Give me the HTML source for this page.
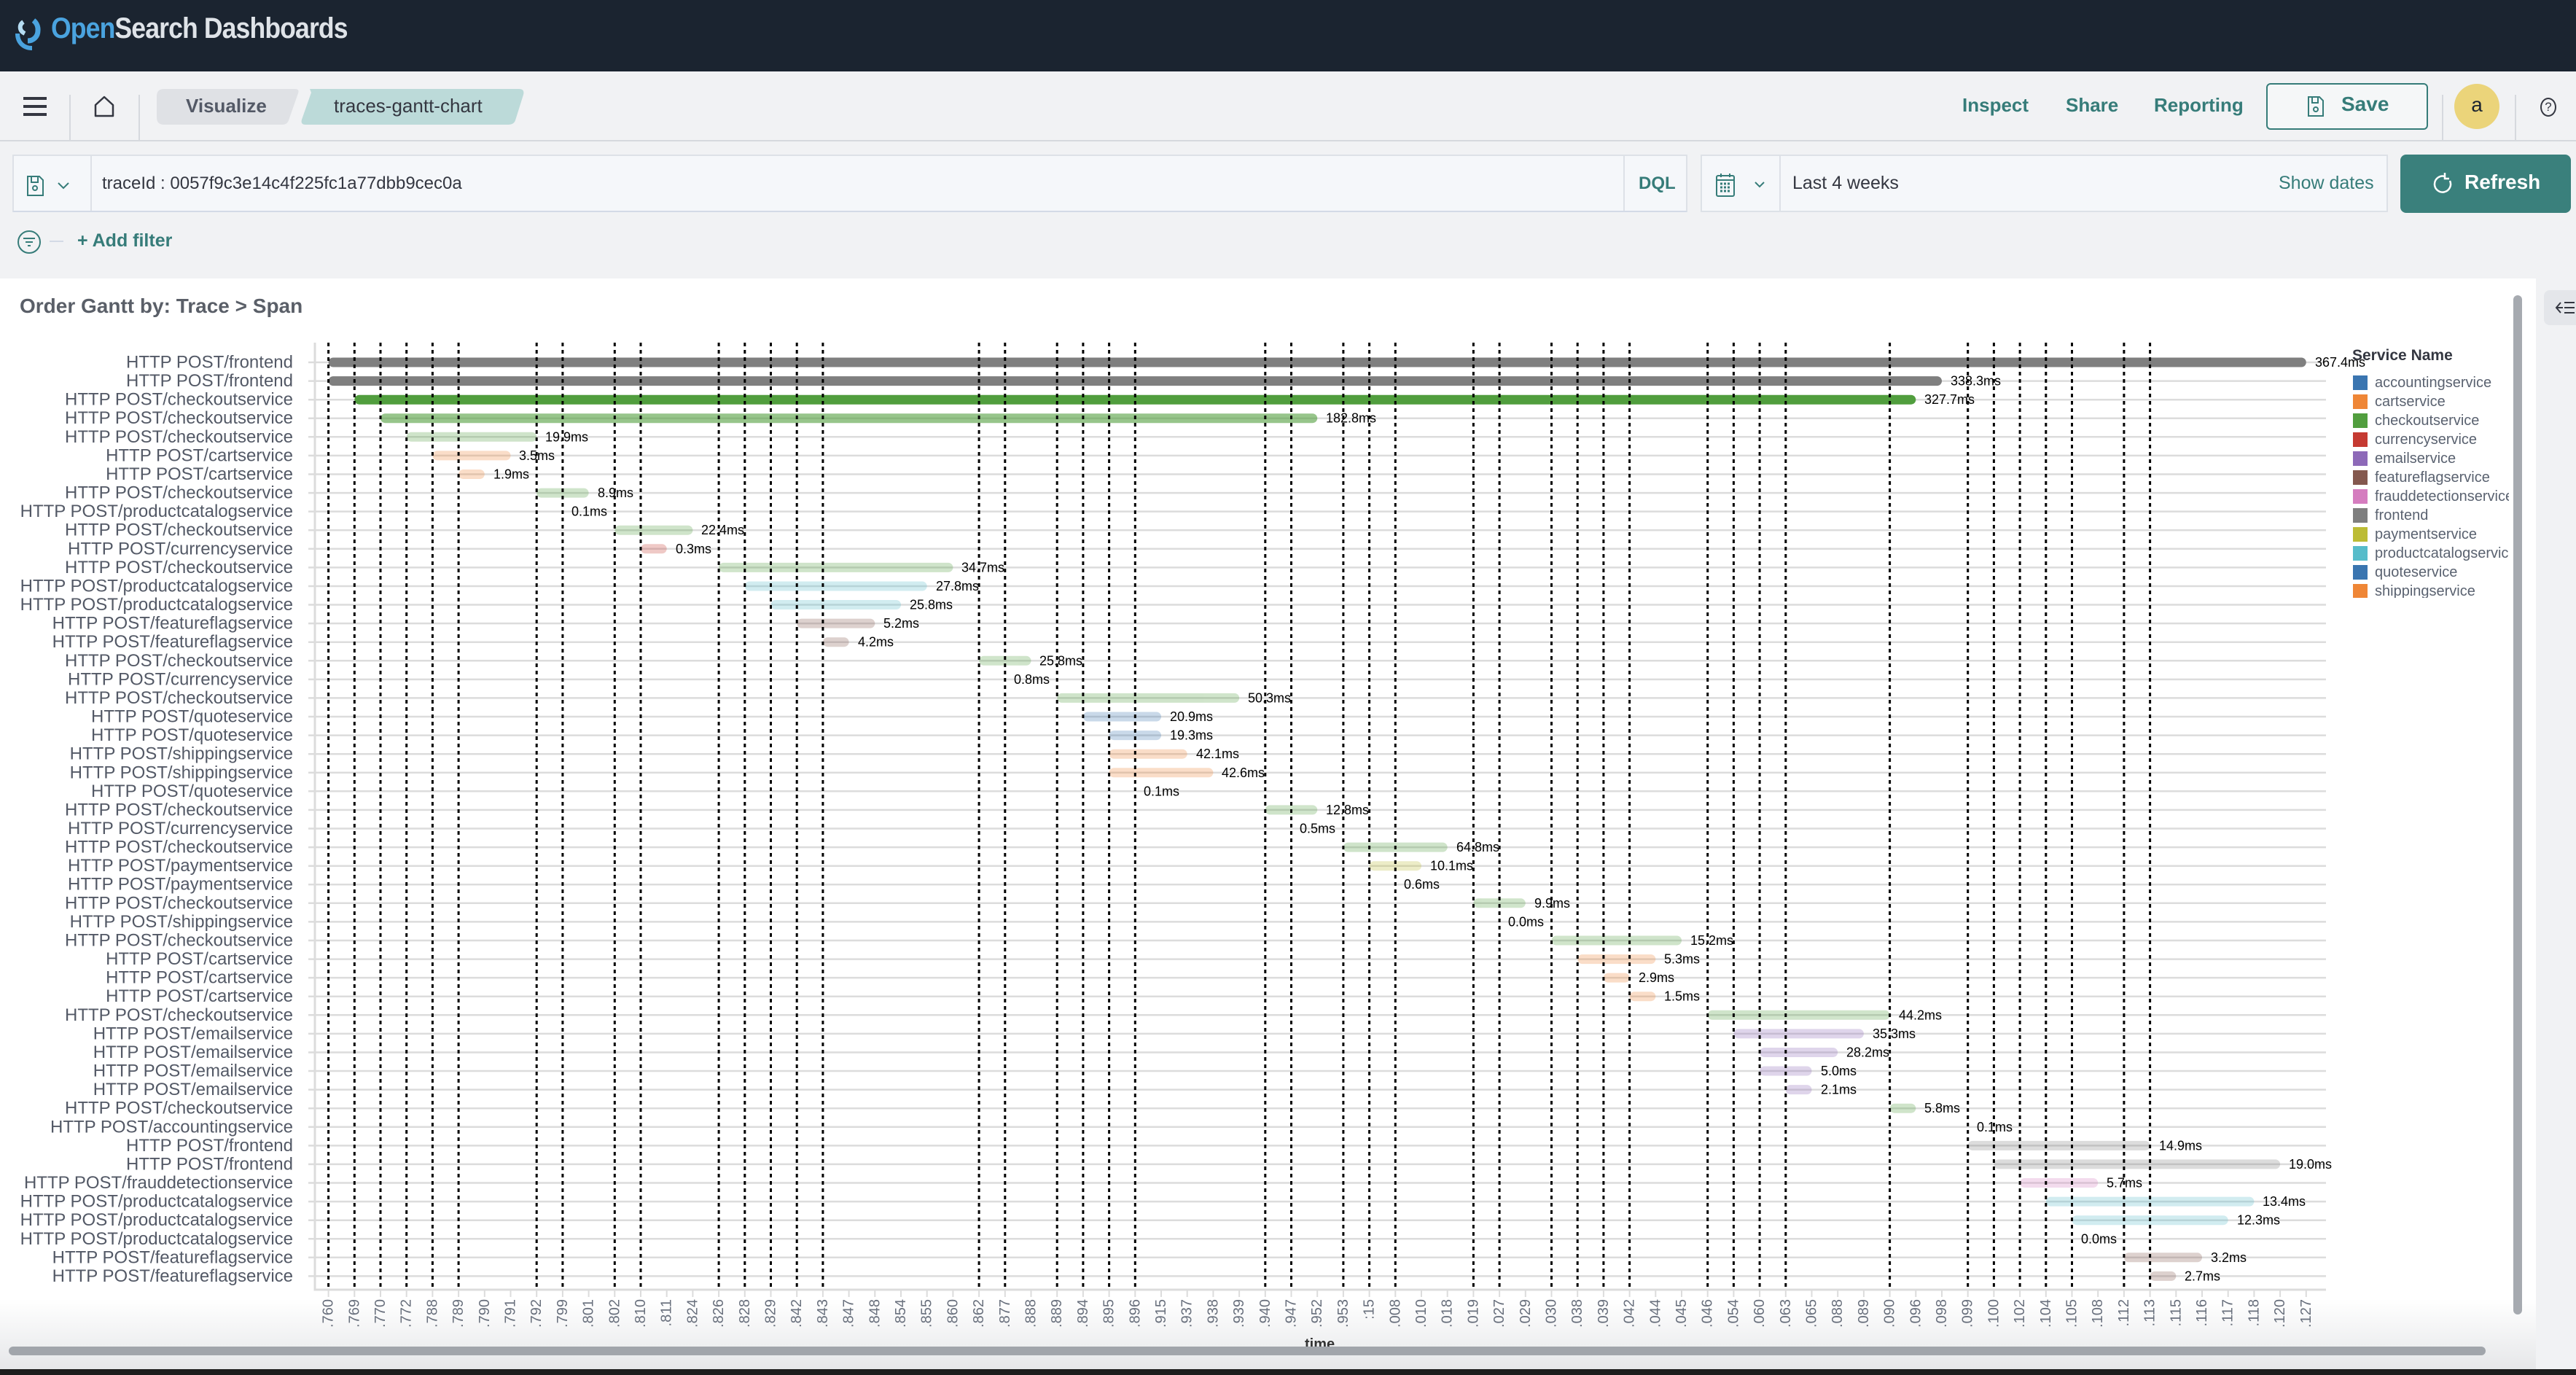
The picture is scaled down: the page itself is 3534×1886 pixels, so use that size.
<!DOCTYPE html>
<html><head><meta charset="utf-8"><style>
*{margin:0;padding:0;box-sizing:border-box}
body{width:3534px;height:1886px;overflow:hidden;background:#f1f2f4;font-family:"Liberation Sans",sans-serif;position:relative}
.a{position:absolute}
.t{color:#367c79;font-weight:bold;font-size:25px}
</style></head><body>
<div class="a" style="left:0;top:0;width:3534px;height:98px;background:#1b2430"></div>
<svg class="a" style="left:18px;top:24px" width="46" height="46" viewBox="0 0 46 46"><path d="M28 4a16 16 0 0 1 6 14c0 8-6 14-14 14" fill="none" stroke="#4aa3df" stroke-width="7"/><path d="M6 22c0 12 8 20 20 20" fill="none" stroke="#4aa3df" stroke-width="6"/><path d="M14 6c-6 4-6 12 2 16" fill="none" stroke="#b5dcf2" stroke-width="6"/></svg>
<div class="a" style="left:70px;top:17px;font-size:40px;font-weight:bold;transform:scaleX(.89);transform-origin:left;color:#dfe3e8;white-space:nowrap;letter-spacing:-1px"><span style="color:#4aa3df">Open</span>Search Dashboards</div>

<div class="a" style="left:0;top:98px;width:3534px;height:96px;background:#f1f2f4;border-bottom:2px solid #d6d9de"></div>
<div class="a" style="left:32px;top:133px;width:32px;height:4px;background:#343741"></div>
<div class="a" style="left:32px;top:144px;width:32px;height:4px;background:#343741"></div>
<div class="a" style="left:32px;top:155px;width:32px;height:4px;background:#343741"></div>
<div class="a" style="left:95px;top:130px;width:2px;height:64px;background:#d6d9de"></div>
<div class="a" style="left:190px;top:130px;width:2px;height:64px;background:#d6d9de"></div>
<svg class="a" style="left:128px;top:130px" width="30" height="32"><path d="M3 14L15 3L27 14V29H3Z" fill="none" stroke="#343741" stroke-width="2.5" stroke-linejoin="round"/></svg>
<svg class="a" style="left:215px;top:122px" width="510" height="49"><path d="M10 0H190Q196 0 194 6L181 43Q179 49 172 49H10Q0 49 0 39V10Q0 0 10 0Z" fill="#dfe1e5"/><path d="M210 0H497Q505 0 503 8L492 43Q490 49 482 49H204Q197 49 199 42L212 5Z" fill="#bcdad9"/></svg>
<div class="a" style="left:255px;top:130px;font-size:26px;font-weight:bold;color:#535966">Visualize</div>
<div class="a" style="left:458px;top:130px;font-size:26px;color:#343741">traces-gantt-chart</div>
<div class="a t" style="left:2692px;top:129px;font-size:26px">Inspect</div>
<div class="a t" style="left:2834px;top:129px;font-size:26px">Share</div>
<div class="a t" style="left:2955px;top:129px;font-size:26px">Reporting</div>
<div class="a" style="left:3109px;top:114px;width:222px;height:64px;border:2px solid #367c79;border-radius:6px;background:#f5f7f8"></div>
<svg class="a" style="left:3165px;top:131px" width="24" height="30"><path d="M2 2H17L22 7V28H2Z M7 2V10H15V2" fill="none" stroke="#367c79" stroke-width="2"/><circle cx="12" cy="19" r="3" fill="none" stroke="#367c79" stroke-width="2"/></svg>
<div class="a t" style="left:3212px;top:127px;font-size:28px">Save</div>
<div class="a" style="left:3350px;top:130px;width:2px;height:64px;background:#d6d9de"></div>
<div class="a" style="left:3367px;top:115px;width:62px;height:62px;border-radius:50%;background:#ebd47a;text-align:center;font-size:28px;line-height:58px;color:#1b2430">a</div>
<div class="a" style="left:3450px;top:130px;width:2px;height:64px;background:#d6d9de"></div>
<div class="a" style="left:3485px;top:134px;width:22px;height:26px;border:2px solid #343741;border-radius:50%;font-size:17px;text-align:center;line-height:22px;color:#343741">?</div>

<div class="a" style="left:17px;top:212px;width:2298px;height:79px;background:#f5f7fa;border:2px solid #dde1e7;border-bottom-color:#d3dae6"></div>
<svg class="a" style="left:36px;top:240px" width="60" height="30"><path d="M2 2H18L23 7V28H2Z M7 2V10H16V2" fill="none" stroke="#367c79" stroke-width="2"/><circle cx="12" cy="18" r="3" fill="none" stroke="#367c79" stroke-width="2"/><path d="M44 11L51 18L58 11" fill="none" stroke="#367c79" stroke-width="2"/></svg>
<div class="a" style="left:124px;top:214px;width:2px;height:75px;background:#dde1e7"></div>
<div class="a" style="left:140px;top:238px;font-size:24px;color:#343741">traceId : 0057f9c3e14c4f225fc1a77dbb9cec0a</div>
<div class="a" style="left:2227px;top:214px;width:2px;height:75px;background:#dde1e7"></div>
<div class="a t" style="left:2248px;top:238px;font-size:24px">DQL</div>
<div class="a" style="left:2333px;top:212px;width:943px;height:79px;background:#f5f7fa;border:2px solid #dde1e7"></div>
<svg class="a" style="left:2354px;top:237px" width="70" height="34"><rect x="1" y="4" width="24" height="28" rx="2" fill="none" stroke="#367c79" stroke-width="2"/><path d="M1 10H25M7 1V6M19 1V6" stroke="#367c79" stroke-width="2"/><path d="M6 15h3M11 15h3M16 15h3M6 20h3M11 20h3M16 20h3M6 25h3M11 25h3M16 25h3" stroke="#367c79" stroke-width="3"/><path d="M54 13L60 19L66 13" fill="none" stroke="#367c79" stroke-width="2"/></svg>
<div class="a" style="left:2441px;top:214px;width:2px;height:75px;background:#dde1e7"></div>
<div class="a" style="left:2459px;top:237px;font-size:25px;color:#343741">Last 4 weeks</div>
<div class="a" style="left:3126px;top:237px;font-size:25px;color:#367c79">Show dates</div>
<div class="a" style="left:3293px;top:212px;width:234px;height:80px;background:#3a807c;border-radius:8px"></div>
<svg class="a" style="left:3336px;top:236px" width="30" height="32"><path d="M18 6A11 11 0 1 0 25 12" fill="none" stroke="#fff" stroke-width="2.5"/><path d="M18 1V9H24" fill="none" stroke="#fff" stroke-width="2.5"/></svg>
<div class="a" style="left:3381px;top:234px;font-size:28px;font-weight:bold;color:#fff">Refresh</div>

<svg class="a" style="left:22px;top:315px" width="70" height="36"><circle cx="18" cy="17" r="15" fill="none" stroke="#367c79" stroke-width="2"/><path d="M10 12H26M13 17H23M16 22H20" stroke="#367c79" stroke-width="2"/><path d="M46 16H65" stroke="#d3dae6" stroke-width="2"/></svg>
<div class="a t" style="left:106px;top:316px">+ Add filter</div>

<div class="a" style="left:0;top:382px;width:3479px;height:1496px;background:linear-gradient(#fff 0,#fff 1400px,#e6e7e9 1496px)"></div>
<div class="a" style="left:3490px;top:398px;width:44px;height:48px;background:#e4e6ea;border-radius:8px 0 0 8px"></div>
<svg class="a" style="left:3504px;top:410px" width="30" height="24"><path d="M9 5L3 12L9 19M3 12H12M14 5H28M14 12H28M14 19H28" fill="none" stroke="#343741" stroke-width="2"/></svg>
<div class="a" style="left:27px;top:404px;font-size:28px;font-weight:bold;color:#5a5f68">Order Gantt by: Trace &gt; Span</div>

<svg class="a" style="left:0;top:0" width="3534" height="1886" font-family="Liberation Sans, sans-serif">
<path stroke="#dcdcdc" stroke-width="2.5" d="M423 497H3191M423 522.6H3191M423 548.2H3191M423 573.7H3191M423 599.3H3191M423 624.9H3191M423 650.5H3191M423 676.1H3191M423 701.6H3191M423 727.2H3191M423 752.8H3191M423 778.4H3191M423 804H3191M423 829.5H3191M423 855.1H3191M423 880.7H3191M423 906.3H3191M423 931.9H3191M423 957.4H3191M423 983H3191M423 1008.6H3191M423 1034.2H3191M423 1059.8H3191M423 1085.3H3191M423 1110.9H3191M423 1136.5H3191M423 1162.1H3191M423 1187.7H3191M423 1213.2H3191M423 1238.8H3191M423 1264.4H3191M423 1290H3191M423 1315.6H3191M423 1341.1H3191M423 1366.7H3191M423 1392.3H3191M423 1417.9H3191M423 1443.5H3191M423 1469H3191M423 1494.6H3191M423 1520.2H3191M423 1545.8H3191M423 1571.4H3191M423 1596.9H3191M423 1622.5H3191M423 1648.1H3191M423 1673.7H3191M423 1699.3H3191M423 1724.8H3191M423 1750.4H3191"/>
<path stroke="#dcdcdc" stroke-width="3" fill="none" d="M432 470V1769H3191"/>
<g transform="translate(0,-6.5)">
<rect x="450.6" y="497" width="2713.2" height="13" rx="6.5" fill="#7f7f7f"/>
<rect x="450.6" y="522.6" width="2213.4" height="13" rx="6.5" fill="#7f7f7f"/>
<rect x="486.3" y="548.2" width="2142" height="13" rx="6.5" fill="#519e3e"/>
<rect x="522" y="573.7" width="1285.2" height="13" rx="6.5" fill="#519e3e" opacity=".6"/>
<g opacity=".27">
<rect x="557.7" y="599.3" width="178.5" height="13" rx="6.5" fill="#519e3e"/>
<rect x="593.4" y="624.9" width="107.1" height="13" rx="6.5" fill="#ef8636"/>
<rect x="629.1" y="650.5" width="35.7" height="13" rx="6.5" fill="#ef8636"/>
<rect x="736.2" y="676.1" width="71.4" height="13" rx="6.5" fill="#519e3e"/>
<rect x="843.3" y="727.2" width="107.1" height="13" rx="6.5" fill="#519e3e"/>
<rect x="879" y="752.8" width="35.7" height="13" rx="6.5" fill="#c53a32"/>
<rect x="986.1" y="778.4" width="321.3" height="13" rx="6.5" fill="#519e3e"/>
<rect x="1021.8" y="804" width="249.9" height="13" rx="6.5" fill="#57bcca"/>
<rect x="1057.5" y="829.5" width="178.5" height="13" rx="6.5" fill="#57bcca"/>
<rect x="1093.2" y="855.1" width="107.1" height="13" rx="6.5" fill="#84584e"/>
<rect x="1128.9" y="880.7" width="35.7" height="13" rx="6.5" fill="#84584e"/>
<rect x="1343.1" y="906.3" width="71.4" height="13" rx="6.5" fill="#519e3e"/>
<rect x="1450.2" y="957.4" width="249.9" height="13" rx="6.5" fill="#519e3e"/>
<rect x="1485.9" y="983" width="107.1" height="13" rx="6.5" fill="#3a75b0"/>
<rect x="1521.6" y="1008.6" width="71.4" height="13" rx="6.5" fill="#3a75b0"/>
<rect x="1521.6" y="1034.2" width="107.1" height="13" rx="6.5" fill="#ef8636"/>
<rect x="1521.6" y="1059.8" width="142.8" height="13" rx="6.5" fill="#ef8636"/>
<rect x="1735.8" y="1110.9" width="71.4" height="13" rx="6.5" fill="#519e3e"/>
<rect x="1842.9" y="1162.1" width="142.8" height="13" rx="6.5" fill="#519e3e"/>
<rect x="1878.6" y="1187.7" width="71.4" height="13" rx="6.5" fill="#bcbc35"/>
<rect x="2021.4" y="1238.8" width="71.4" height="13" rx="6.5" fill="#519e3e"/>
<rect x="2128.5" y="1290" width="178.5" height="13" rx="6.5" fill="#519e3e"/>
<rect x="2164.2" y="1315.6" width="107.1" height="13" rx="6.5" fill="#ef8636"/>
<rect x="2199.9" y="1341.1" width="35.7" height="13" rx="6.5" fill="#ef8636"/>
<rect x="2235.6" y="1366.7" width="35.7" height="13" rx="6.5" fill="#ef8636"/>
<rect x="2342.7" y="1392.3" width="249.9" height="13" rx="6.5" fill="#519e3e"/>
<rect x="2378.4" y="1417.9" width="178.5" height="13" rx="6.5" fill="#8d69b8"/>
<rect x="2414.1" y="1443.5" width="107.1" height="13" rx="6.5" fill="#8d69b8"/>
<rect x="2414.1" y="1469" width="71.4" height="13" rx="6.5" fill="#8d69b8"/>
<rect x="2449.8" y="1494.6" width="35.7" height="13" rx="6.5" fill="#8d69b8"/>
<rect x="2592.6" y="1520.2" width="35.7" height="13" rx="6.5" fill="#519e3e"/>
<rect x="2699.7" y="1571.4" width="249.9" height="13" rx="6.5" fill="#7f7f7f"/>
<rect x="2735.4" y="1596.9" width="392.7" height="13" rx="6.5" fill="#7f7f7f"/>
<rect x="2771.1" y="1622.5" width="107.1" height="13" rx="6.5" fill="#d57dbf"/>
<rect x="2806.8" y="1648.1" width="285.6" height="13" rx="6.5" fill="#57bcca"/>
<rect x="2842.5" y="1673.7" width="214.2" height="13" rx="6.5" fill="#57bcca"/>
<rect x="2913.9" y="1724.8" width="107.1" height="13" rx="6.5" fill="#84584e"/>
<rect x="2949.6" y="1750.4" width="35.7" height="13" rx="6.5" fill="#84584e"/>
</g></g>
<path stroke="#000" stroke-width="3" stroke-dasharray="5 5" d="M450.6 470V1769M486.3 470V1769M522 470V1769M557.7 470V1769M593.4 470V1769M629.1 470V1769M736.2 470V1769M771.9 470V1769M843.3 470V1769M879 470V1769M986.1 470V1769M1021.8 470V1769M1057.5 470V1769M1093.2 470V1769M1128.9 470V1769M1343.1 470V1769M1378.8 470V1769M1450.2 470V1769M1485.9 470V1769M1521.6 470V1769M1557.3 470V1769M1735.8 470V1769M1771.5 470V1769M1842.9 470V1769M1878.6 470V1769M1914.3 470V1769M2021.4 470V1769M2057.1 470V1769M2128.5 470V1769M2164.2 470V1769M2199.9 470V1769M2235.6 470V1769M2342.7 470V1769M2378.4 470V1769M2414.1 470V1769M2449.8 470V1769M2592.6 470V1769M2699.7 470V1769M2735.4 470V1769M2771.1 470V1769M2806.8 470V1769M2842.5 470V1769M2913.9 470V1769M2949.6 470V1769"/>
<g font-size="24" fill="#535966" text-anchor="end" dominant-baseline="central">
<text x="402" y="497">HTTP POST/frontend</text><text x="402" y="522.6">HTTP POST/frontend</text><text x="402" y="548.2">HTTP POST/checkoutservice</text><text x="402" y="573.7">HTTP POST/checkoutservice</text><text x="402" y="599.3">HTTP POST/checkoutservice</text><text x="402" y="624.9">HTTP POST/cartservice</text><text x="402" y="650.5">HTTP POST/cartservice</text><text x="402" y="676.1">HTTP POST/checkoutservice</text><text x="402" y="701.6">HTTP POST/productcatalogservice</text><text x="402" y="727.2">HTTP POST/checkoutservice</text><text x="402" y="752.8">HTTP POST/currencyservice</text><text x="402" y="778.4">HTTP POST/checkoutservice</text><text x="402" y="804">HTTP POST/productcatalogservice</text><text x="402" y="829.5">HTTP POST/productcatalogservice</text><text x="402" y="855.1">HTTP POST/featureflagservice</text><text x="402" y="880.7">HTTP POST/featureflagservice</text><text x="402" y="906.3">HTTP POST/checkoutservice</text><text x="402" y="931.9">HTTP POST/currencyservice</text><text x="402" y="957.4">HTTP POST/checkoutservice</text><text x="402" y="983">HTTP POST/quoteservice</text><text x="402" y="1008.6">HTTP POST/quoteservice</text><text x="402" y="1034.2">HTTP POST/shippingservice</text><text x="402" y="1059.8">HTTP POST/shippingservice</text><text x="402" y="1085.3">HTTP POST/quoteservice</text><text x="402" y="1110.9">HTTP POST/checkoutservice</text><text x="402" y="1136.5">HTTP POST/currencyservice</text><text x="402" y="1162.1">HTTP POST/checkoutservice</text><text x="402" y="1187.7">HTTP POST/paymentservice</text><text x="402" y="1213.2">HTTP POST/paymentservice</text><text x="402" y="1238.8">HTTP POST/checkoutservice</text><text x="402" y="1264.4">HTTP POST/shippingservice</text><text x="402" y="1290">HTTP POST/checkoutservice</text><text x="402" y="1315.6">HTTP POST/cartservice</text><text x="402" y="1341.1">HTTP POST/cartservice</text><text x="402" y="1366.7">HTTP POST/cartservice</text><text x="402" y="1392.3">HTTP POST/checkoutservice</text><text x="402" y="1417.9">HTTP POST/emailservice</text><text x="402" y="1443.5">HTTP POST/emailservice</text><text x="402" y="1469">HTTP POST/emailservice</text><text x="402" y="1494.6">HTTP POST/emailservice</text><text x="402" y="1520.2">HTTP POST/checkoutservice</text><text x="402" y="1545.8">HTTP POST/accountingservice</text><text x="402" y="1571.4">HTTP POST/frontend</text><text x="402" y="1596.9">HTTP POST/frontend</text><text x="402" y="1622.5">HTTP POST/frauddetectionservice</text><text x="402" y="1648.1">HTTP POST/productcatalogservice</text><text x="402" y="1673.7">HTTP POST/productcatalogservice</text><text x="402" y="1699.3">HTTP POST/productcatalogservice</text><text x="402" y="1724.8">HTTP POST/featureflagservice</text><text x="402" y="1750.4">HTTP POST/featureflagservice</text>
</g>
<g font-size="18" fill="#000" dominant-baseline="central">
<text x="3176" y="497">367.4ms</text><text x="2676" y="522.6">338.3ms</text><text x="2640" y="548.2">327.7ms</text><text x="1819" y="573.7">182.8ms</text><text x="748" y="599.3">19.9ms</text><text x="712" y="624.9">3.5ms</text><text x="677" y="650.5">1.9ms</text><text x="820" y="676.1">8.9ms</text><text x="784" y="701.6">0.1ms</text><text x="962" y="727.2">22.4ms</text><text x="927" y="752.8">0.3ms</text><text x="1319" y="778.4">34.7ms</text><text x="1284" y="804">27.8ms</text><text x="1248" y="829.5">25.8ms</text><text x="1212" y="855.1">5.2ms</text><text x="1177" y="880.7">4.2ms</text><text x="1426" y="906.3">25.8ms</text><text x="1391" y="931.9">0.8ms</text><text x="1712" y="957.4">50.3ms</text><text x="1605" y="983">20.9ms</text><text x="1605" y="1008.6">19.3ms</text><text x="1641" y="1034.2">42.1ms</text><text x="1676" y="1059.8">42.6ms</text><text x="1569" y="1085.3">0.1ms</text><text x="1819" y="1110.9">12.8ms</text><text x="1783" y="1136.5">0.5ms</text><text x="1998" y="1162.1">64.8ms</text><text x="1962" y="1187.7">10.1ms</text><text x="1926" y="1213.2">0.6ms</text><text x="2105" y="1238.8">9.9ms</text><text x="2069" y="1264.4">0.0ms</text><text x="2319" y="1290">15.2ms</text><text x="2283" y="1315.6">5.3ms</text><text x="2248" y="1341.1">2.9ms</text><text x="2283" y="1366.7">1.5ms</text><text x="2605" y="1392.3">44.2ms</text><text x="2569" y="1417.9">35.3ms</text><text x="2533" y="1443.5">28.2ms</text><text x="2498" y="1469">5.0ms</text><text x="2498" y="1494.6">2.1ms</text><text x="2640" y="1520.2">5.8ms</text><text x="2712" y="1545.8">0.1ms</text><text x="2962" y="1571.4">14.9ms</text><text x="3140" y="1596.9">19.0ms</text><text x="2890" y="1622.5">5.7ms</text><text x="3104" y="1648.1">13.4ms</text><text x="3069" y="1673.7">12.3ms</text><text x="2855" y="1699.3">0.0ms</text><text x="3033" y="1724.8">3.2ms</text><text x="2997" y="1750.4">2.7ms</text>
</g>
<path stroke="#dcdcdc" stroke-width="2" d="M450.6 1769v10M486.3 1769v10M522 1769v10M557.7 1769v10M593.4 1769v10M629.1 1769v10M664.8 1769v10M700.5 1769v10M736.2 1769v10M771.9 1769v10M807.6 1769v10M843.3 1769v10M879 1769v10M914.7 1769v10M950.4 1769v10M986.1 1769v10M1021.8 1769v10M1057.5 1769v10M1093.2 1769v10M1128.9 1769v10M1164.6 1769v10M1200.3 1769v10M1236 1769v10M1271.7 1769v10M1307.4 1769v10M1343.1 1769v10M1378.8 1769v10M1414.5 1769v10M1450.2 1769v10M1485.9 1769v10M1521.6 1769v10M1557.3 1769v10M1593 1769v10M1628.7 1769v10M1664.4 1769v10M1700.1 1769v10M1735.8 1769v10M1771.5 1769v10M1807.2 1769v10M1842.9 1769v10M1878.6 1769v10M1914.3 1769v10M1950 1769v10M1985.7 1769v10M2021.4 1769v10M2057.1 1769v10M2092.8 1769v10M2128.5 1769v10M2164.2 1769v10M2199.9 1769v10M2235.6 1769v10M2271.3 1769v10M2307 1769v10M2342.7 1769v10M2378.4 1769v10M2414.1 1769v10M2449.8 1769v10M2485.5 1769v10M2521.2 1769v10M2556.9 1769v10M2592.6 1769v10M2628.3 1769v10M2664 1769v10M2699.7 1769v10M2735.4 1769v10M2771.1 1769v10M2806.8 1769v10M2842.5 1769v10M2878.2 1769v10M2913.9 1769v10M2949.6 1769v10M2985.3 1769v10M3021 1769v10M3056.7 1769v10M3092.4 1769v10M3128.1 1769v10M3163.8 1769v10"/>
<g font-size="20" fill="#69707d" text-anchor="end" dominant-baseline="central">
<text x="450.6" y="1782" transform="rotate(-90 450.6 1782)">.760</text><text x="486.3" y="1782" transform="rotate(-90 486.3 1782)">.769</text><text x="522" y="1782" transform="rotate(-90 522 1782)">.770</text><text x="557.7" y="1782" transform="rotate(-90 557.7 1782)">.772</text><text x="593.4" y="1782" transform="rotate(-90 593.4 1782)">.788</text><text x="629.1" y="1782" transform="rotate(-90 629.1 1782)">.789</text><text x="664.8" y="1782" transform="rotate(-90 664.8 1782)">.790</text><text x="700.5" y="1782" transform="rotate(-90 700.5 1782)">.791</text><text x="736.2" y="1782" transform="rotate(-90 736.2 1782)">.792</text><text x="771.9" y="1782" transform="rotate(-90 771.9 1782)">.799</text><text x="807.6" y="1782" transform="rotate(-90 807.6 1782)">.801</text><text x="843.3" y="1782" transform="rotate(-90 843.3 1782)">.802</text><text x="879" y="1782" transform="rotate(-90 879 1782)">.810</text><text x="914.7" y="1782" transform="rotate(-90 914.7 1782)">.811</text><text x="950.4" y="1782" transform="rotate(-90 950.4 1782)">.824</text><text x="986.1" y="1782" transform="rotate(-90 986.1 1782)">.826</text><text x="1021.8" y="1782" transform="rotate(-90 1021.8 1782)">.828</text><text x="1057.5" y="1782" transform="rotate(-90 1057.5 1782)">.829</text><text x="1093.2" y="1782" transform="rotate(-90 1093.2 1782)">.842</text><text x="1128.9" y="1782" transform="rotate(-90 1128.9 1782)">.843</text><text x="1164.6" y="1782" transform="rotate(-90 1164.6 1782)">.847</text><text x="1200.3" y="1782" transform="rotate(-90 1200.3 1782)">.848</text><text x="1236" y="1782" transform="rotate(-90 1236 1782)">.854</text><text x="1271.7" y="1782" transform="rotate(-90 1271.7 1782)">.855</text><text x="1307.4" y="1782" transform="rotate(-90 1307.4 1782)">.860</text><text x="1343.1" y="1782" transform="rotate(-90 1343.1 1782)">.862</text><text x="1378.8" y="1782" transform="rotate(-90 1378.8 1782)">.877</text><text x="1414.5" y="1782" transform="rotate(-90 1414.5 1782)">.888</text><text x="1450.2" y="1782" transform="rotate(-90 1450.2 1782)">.889</text><text x="1485.9" y="1782" transform="rotate(-90 1485.9 1782)">.894</text><text x="1521.6" y="1782" transform="rotate(-90 1521.6 1782)">.895</text><text x="1557.3" y="1782" transform="rotate(-90 1557.3 1782)">.896</text><text x="1593" y="1782" transform="rotate(-90 1593 1782)">.915</text><text x="1628.7" y="1782" transform="rotate(-90 1628.7 1782)">.937</text><text x="1664.4" y="1782" transform="rotate(-90 1664.4 1782)">.938</text><text x="1700.1" y="1782" transform="rotate(-90 1700.1 1782)">.939</text><text x="1735.8" y="1782" transform="rotate(-90 1735.8 1782)">.940</text><text x="1771.5" y="1782" transform="rotate(-90 1771.5 1782)">.947</text><text x="1807.2" y="1782" transform="rotate(-90 1807.2 1782)">.952</text><text x="1842.9" y="1782" transform="rotate(-90 1842.9 1782)">.953</text><text x="1878.6" y="1782" transform="rotate(-90 1878.6 1782)">:15</text><text x="1914.3" y="1782" transform="rotate(-90 1914.3 1782)">.008</text><text x="1950" y="1782" transform="rotate(-90 1950 1782)">.010</text><text x="1985.7" y="1782" transform="rotate(-90 1985.7 1782)">.018</text><text x="2021.4" y="1782" transform="rotate(-90 2021.4 1782)">.019</text><text x="2057.1" y="1782" transform="rotate(-90 2057.1 1782)">.027</text><text x="2092.8" y="1782" transform="rotate(-90 2092.8 1782)">.029</text><text x="2128.5" y="1782" transform="rotate(-90 2128.5 1782)">.030</text><text x="2164.2" y="1782" transform="rotate(-90 2164.2 1782)">.038</text><text x="2199.9" y="1782" transform="rotate(-90 2199.9 1782)">.039</text><text x="2235.6" y="1782" transform="rotate(-90 2235.6 1782)">.042</text><text x="2271.3" y="1782" transform="rotate(-90 2271.3 1782)">.044</text><text x="2307" y="1782" transform="rotate(-90 2307 1782)">.045</text><text x="2342.7" y="1782" transform="rotate(-90 2342.7 1782)">.046</text><text x="2378.4" y="1782" transform="rotate(-90 2378.4 1782)">.054</text><text x="2414.1" y="1782" transform="rotate(-90 2414.1 1782)">.060</text><text x="2449.8" y="1782" transform="rotate(-90 2449.8 1782)">.063</text><text x="2485.5" y="1782" transform="rotate(-90 2485.5 1782)">.065</text><text x="2521.2" y="1782" transform="rotate(-90 2521.2 1782)">.088</text><text x="2556.9" y="1782" transform="rotate(-90 2556.9 1782)">.089</text><text x="2592.6" y="1782" transform="rotate(-90 2592.6 1782)">.090</text><text x="2628.3" y="1782" transform="rotate(-90 2628.3 1782)">.096</text><text x="2664" y="1782" transform="rotate(-90 2664 1782)">.098</text><text x="2699.7" y="1782" transform="rotate(-90 2699.7 1782)">.099</text><text x="2735.4" y="1782" transform="rotate(-90 2735.4 1782)">.100</text><text x="2771.1" y="1782" transform="rotate(-90 2771.1 1782)">.102</text><text x="2806.8" y="1782" transform="rotate(-90 2806.8 1782)">.104</text><text x="2842.5" y="1782" transform="rotate(-90 2842.5 1782)">.105</text><text x="2878.2" y="1782" transform="rotate(-90 2878.2 1782)">.108</text><text x="2913.9" y="1782" transform="rotate(-90 2913.9 1782)">.112</text><text x="2949.6" y="1782" transform="rotate(-90 2949.6 1782)">.113</text><text x="2985.3" y="1782" transform="rotate(-90 2985.3 1782)">.115</text><text x="3021" y="1782" transform="rotate(-90 3021 1782)">.116</text><text x="3056.7" y="1782" transform="rotate(-90 3056.7 1782)">.117</text><text x="3092.4" y="1782" transform="rotate(-90 3092.4 1782)">.118</text><text x="3128.1" y="1782" transform="rotate(-90 3128.1 1782)">.120</text><text x="3163.8" y="1782" transform="rotate(-90 3163.8 1782)">.127</text>
</g>
<text x="1790" y="1850" font-size="20" font-weight="bold" fill="#333">time</text>
</svg>

<div class="a" style="left:3225px;top:470px;width:217px;height:350px;overflow:hidden;font-size:20px;color:#5a6270;white-space:nowrap">
<div style="position:absolute;left:2px;top:6px;font-weight:bold;font-size:21px;color:#343741">Service Name</div>
<div style="position:absolute;left:0;top:42px;line-height:26px">
<div><span style="display:inline-block;width:20px;height:20px;background:#3a75b0;vertical-align:-4px;margin:0 10px 0 3px"></span>accountingservice</div>
<div><span style="display:inline-block;width:20px;height:20px;background:#ef8636;vertical-align:-4px;margin:0 10px 0 3px"></span>cartservice</div>
<div><span style="display:inline-block;width:20px;height:20px;background:#519e3e;vertical-align:-4px;margin:0 10px 0 3px"></span>checkoutservice</div>
<div><span style="display:inline-block;width:20px;height:20px;background:#c53a32;vertical-align:-4px;margin:0 10px 0 3px"></span>currencyservice</div>
<div><span style="display:inline-block;width:20px;height:20px;background:#8d69b8;vertical-align:-4px;margin:0 10px 0 3px"></span>emailservice</div>
<div><span style="display:inline-block;width:20px;height:20px;background:#84584e;vertical-align:-4px;margin:0 10px 0 3px"></span>featureflagservice</div>
<div><span style="display:inline-block;width:20px;height:20px;background:#d57dbf;vertical-align:-4px;margin:0 10px 0 3px"></span>frauddetectionservice</div>
<div><span style="display:inline-block;width:20px;height:20px;background:#7f7f7f;vertical-align:-4px;margin:0 10px 0 3px"></span>frontend</div>
<div><span style="display:inline-block;width:20px;height:20px;background:#bcbc35;vertical-align:-4px;margin:0 10px 0 3px"></span>paymentservice</div>
<div><span style="display:inline-block;width:20px;height:20px;background:#57bcca;vertical-align:-4px;margin:0 10px 0 3px"></span>productcatalogservice</div>
<div><span style="display:inline-block;width:20px;height:20px;background:#3a75b0;vertical-align:-4px;margin:0 10px 0 3px"></span>quoteservice</div>
<div><span style="display:inline-block;width:20px;height:20px;background:#ef8636;vertical-align:-4px;margin:0 10px 0 3px"></span>shippingservice</div>
</div></div>

<div class="a" style="left:3448px;top:405px;width:12px;height:1398px;background:#a6aab0;border-radius:6px"></div>
<div class="a" style="left:12px;top:1847px;width:3398px;height:12px;background:#a1a5ab;border-radius:6px"></div>
<div class="a" style="left:0;top:1878px;width:3534px;height:8px;background:#1c1c1c"></div>
</body></html>
